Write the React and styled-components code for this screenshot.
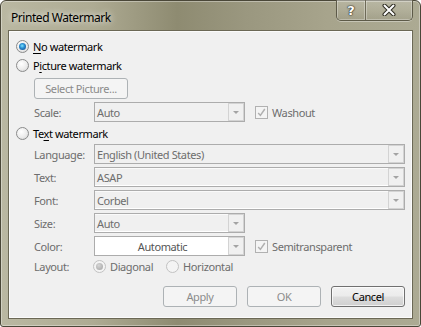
import React from 'react';
import styled, { createGlobalStyle } from 'styled-components';

const Global = createGlobalStyle`
  html, body { margin: 0; padding: 0; background: #fff; }
  body { font-family: "Noto Sans", "Open Sans", sans-serif; font-size: 11px; letter-spacing: -0.4px; }
  * { box-sizing: border-box; }
`;

const Window = styled.div`
  width: 421px;
  height: 327px;
  border: 1px solid #4a4738;
  border-radius: 6px 6px 3px 3px;
  background: linear-gradient(90deg, #bab8a2 0%, #aeab93 22%, #8e8b71 42%, #9a977f 58%, #a7a48c 78%, #acaa93 100%);
  box-shadow: inset 0 0 0 1px rgba(255, 255, 255, 0.35);
  display: flex;
  flex-direction: column;
  padding: 0 7px 7px 7px;
`;

const TitleBar = styled.div`
  height: 29px;
  display: flex;
  align-items: flex-start;
  justify-content: space-between;
`;

const Title = styled.span`
  margin-top: 8px;
  margin-left: 3px;
  font-size: 12px;
  color: #000;
  letter-spacing: -0.45px;
  text-shadow: 0 0 6px rgba(255, 255, 255, 0.7), 0 0 10px rgba(255, 255, 255, 0.5);
`;

const CaptionButtons = styled.div`
  display: flex;
  margin-top: -1px;
  border: 1px solid #5d5a48;
  border-top: none;
  border-radius: 0 0 5px 5px;
  overflow: hidden;
  box-shadow: 0 1px 0 rgba(255, 255, 255, 0.35);
`;

const CaptionButton = styled.div`
  width: ${p => p.$w}px;
  height: 20px;
  display: flex;
  align-items: center;
  justify-content: center;
  background: linear-gradient(180deg, rgba(255,255,255,0.18) 0%, rgba(255,255,255,0.08) 50%, rgba(0,0,0,0.04) 100%);
  box-shadow: inset 0 0 0 1px rgba(255, 255, 255, 0.3);
  & + & { border-left: 1px solid #6d6a57; }
`;

const HelpGlyph = styled.span`
  font-family: "DejaVu Sans", sans-serif;
  font-weight: bold;
  font-size: 13px;
  letter-spacing: 0;
  color: #fff;
  text-shadow: 0 0 1px #2e2c22, 0 0 1px #2e2c22, 0 0 2px #2e2c22;
`;

const Client = styled.div`
  flex: 1;
  border: 1px solid #6b6855;
  background: #f0f0f0;
  box-shadow: inset 0 0 0 1px #fbfbfb;
  display: flex;
  flex-direction: column;
  padding: 0 7px 0 7px;
  color: #000;
`;

const RadioRow = styled.label`
  display: flex;
  align-items: center;
  height: ${p => p.$h || 19}px;
  margin-top: ${p => p.$mt || 0}px;
  gap: 4px;
`;

const RadioCircle = styled.span`
  width: 13px;
  height: 13px;
  flex: none;
  border-radius: 50%;
  border: 1px solid ${p => (p.$disabled ? '#c2c2c2' : '#8a8b8b')};
  background: ${p =>
    p.$disabled
      ? '#f4f4f4'
      : 'radial-gradient(circle at 40% 35%, #ffffff 0%, #ececec 55%, #cfcfcf 100%)'};
  display: flex;
  align-items: center;
  justify-content: center;
  &::after {
    content: '';
    display: ${p => (p.$checked ? 'block' : 'none')};
    width: 7px;
    height: 7px;
    border-radius: 50%;
    background: ${p =>
      p.$disabled
        ? 'radial-gradient(circle at 40% 35%, #d6d6d6, #a2a2a2)'
        : 'radial-gradient(circle at 45% 40%, #7de6ff 0%, #2b8fd3 40%, #0d3f7e 100%)'};
  }
`;

const RadioText = styled.span`
  color: ${p => (p.$disabled ? '#6d6d6d' : '#000')};
  u { text-decoration: underline; text-underline-offset: 2px; }
`;

const PushButton = styled.div`
  width: ${p => p.$w}px;
  height: ${p => p.$h || 21}px;
  border: 1px solid ${p => (p.$disabled ? '#adb2b5' : '#707070')};
  border-radius: 3px;
  display: flex;
  align-items: center;
  justify-content: center;
  color: ${p => (p.$disabled ? '#8b8b8b' : '#000')};
  background: ${p =>
    p.$disabled
      ? '#f4f4f4'
      : 'linear-gradient(180deg, #f2f2f2 0%, #ebebeb 48%, #dddddd 52%, #cfcfcf 100%)'};
  box-shadow: ${p => (p.$disabled ? 'none' : 'inset 0 0 0 1px rgba(255,255,255,0.7)')};
`;

const Indented = styled.div`
  margin-left: 18px;
  margin-top: ${p => p.$mt || 0}px;
  height: ${p => p.$h || 20}px;
  display: flex;
  align-items: center;
`;

const Label = styled.span`
  width: 60px;
  flex: none;
  color: #6d6d6d;
`;

const Combo = styled.div`
  width: ${p => p.$w}px;
  height: 20px;
  flex: none;
  border: 1px solid #acacac;
  background: ${p => (p.$white ? '#ffffff' : '#f0f0f0')};
  box-shadow: ${p => (p.$edit ? 'inset 0 -1px 0 #ffffff, inset 0 1px 0 #fafafa' : 'none')};
  display: flex;
  align-items: stretch;
`;

const ComboText = styled.span`
  flex: 1;
  padding-left: 2px;
  display: flex;
  align-items: center;
  justify-content: ${p => (p.$center ? 'center' : 'flex-start')};
  color: ${p => (p.$dark ? '#555' : '#6d6d6d')};
`;

const ArrowBox = styled.span`
  width: 16px;
  flex: none;
  border: 1px solid #d3d3d3;
  background: #f0f0f0;
  display: flex;
  align-items: center;
  justify-content: center;
  &::after {
    content: '';
    border-left: 3px solid transparent;
    border-right: 3px solid transparent;
    border-top: 3px solid #a3a3a3;
  }
`;

const CheckWrap = styled.span`
  display: flex;
  align-items: center;
  gap: 4px;
  margin-left: 10px;
  color: #6d6d6d;
`;

const CheckBox = styled.span`
  width: 13px;
  height: 13px;
  border: 1px solid #b1b1b1;
  background: #f4f4f4;
  display: flex;
  align-items: center;
  justify-content: center;
`;

const LayoutRadios = styled.div`
  display: flex;
  align-items: center;
  margin-left: -1px;
`;

const LayoutOption = styled.span`
  display: flex;
  align-items: center;
  gap: 4px;
  margin-left: ${p => p.$ml || 0}px;
  color: #6d6d6d;
`;

const ButtonRow = styled.div`
  display: flex;
  justify-content: flex-end;
  gap: 10px;
  margin-top: 11px;
`;

const Check = () => (
  <svg width="9" height="9" viewBox="0 0 9 9">
    <path d="M1.2 5 L3.4 7.4 L7.8 1" fill="none" stroke="#b0b0b0" strokeWidth="1.5" />
  </svg>
);

const CloseIcon = () => (
  <svg width="14" height="12" viewBox="0 0 14 12">
    <path d="M2.5 1.5 L11.5 10.5 M11.5 1.5 L2.5 10.5" stroke="#2e2c22" strokeWidth="4" strokeLinecap="round" />
    <path d="M2.5 1.5 L11.5 10.5 M11.5 1.5 L2.5 10.5" stroke="#ffffff" strokeWidth="2" strokeLinecap="round" />
  </svg>
);

const ComboBox = ({ w, value, white, edit, center }) => (
  <Combo $w={w} $white={white} $edit={edit}>
    <ComboText $center={center} $dark={white}>{value}</ComboText>
    <ArrowBox />
  </Combo>
);

export default function App() {
  return (
    <>
      <Global />
      <Window>
        <TitleBar>
          <Title>Printed Watermark</Title>
          <CaptionButtons>
            <CaptionButton $w={28}><HelpGlyph>?</HelpGlyph></CaptionButton>
            <CaptionButton $w={47}><CloseIcon /></CaptionButton>
          </CaptionButtons>
        </TitleBar>
        <Client>
          <RadioRow $mt={6}>
            <RadioCircle $checked />
            <RadioText><u>N</u>o watermark</RadioText>
          </RadioRow>
          <RadioRow>
            <RadioCircle />
            <RadioText>P<u>i</u>cture watermark</RadioText>
          </RadioRow>
          <Indented $mt={3}>
            <PushButton $disabled $w={94} $h={21}>Select Picture...</PushButton>
          </Indented>
          <Indented $mt={4}>
            <Label>Scale:</Label>
            <ComboBox w={151} value="Auto" />
            <CheckWrap>
              <CheckBox><Check /></CheckBox>
              Washout
            </CheckWrap>
          </Indented>
          <RadioRow $mt={2}>
            <RadioCircle />
            <RadioText>Te<u>x</u>t watermark</RadioText>
          </RadioRow>
          <Indented $mt={1}>
            <Label>Language:</Label>
            <ComboBox w={311} value="English (United States)" />
          </Indented>
          <Indented $mt={3}>
            <Label>Text:</Label>
            <ComboBox w={311} value="ASAP" edit />
          </Indented>
          <Indented $mt={3}>
            <Label>Font:</Label>
            <ComboBox w={311} value="Corbel" edit />
          </Indented>
          <Indented $mt={3}>
            <Label>Size:</Label>
            <ComboBox w={151} value="Auto" edit />
          </Indented>
          <Indented $mt={3}>
            <Label>Color:</Label>
            <ComboBox w={151} value="Automatic" white center />
            <CheckWrap>
              <CheckBox><Check /></CheckBox>
              Semitransparent
            </CheckWrap>
          </Indented>
          <Indented $mt={2} $h={17}>
            <Label>Layout:</Label>
            <LayoutRadios>
              <LayoutOption>
                <RadioCircle $checked $disabled />
                Diagonal
              </LayoutOption>
              <LayoutOption $ml={13}>
                <RadioCircle $disabled />
                Horizontal
              </LayoutOption>
            </LayoutRadios>
          </Indented>
          <ButtonRow>
            <PushButton $disabled $w={74}>Apply</PushButton>
            <PushButton $disabled $w={74}>OK</PushButton>
            <PushButton $w={74}>Cancel</PushButton>
          </ButtonRow>
        </Client>
      </Window>
    </>
  );
}
